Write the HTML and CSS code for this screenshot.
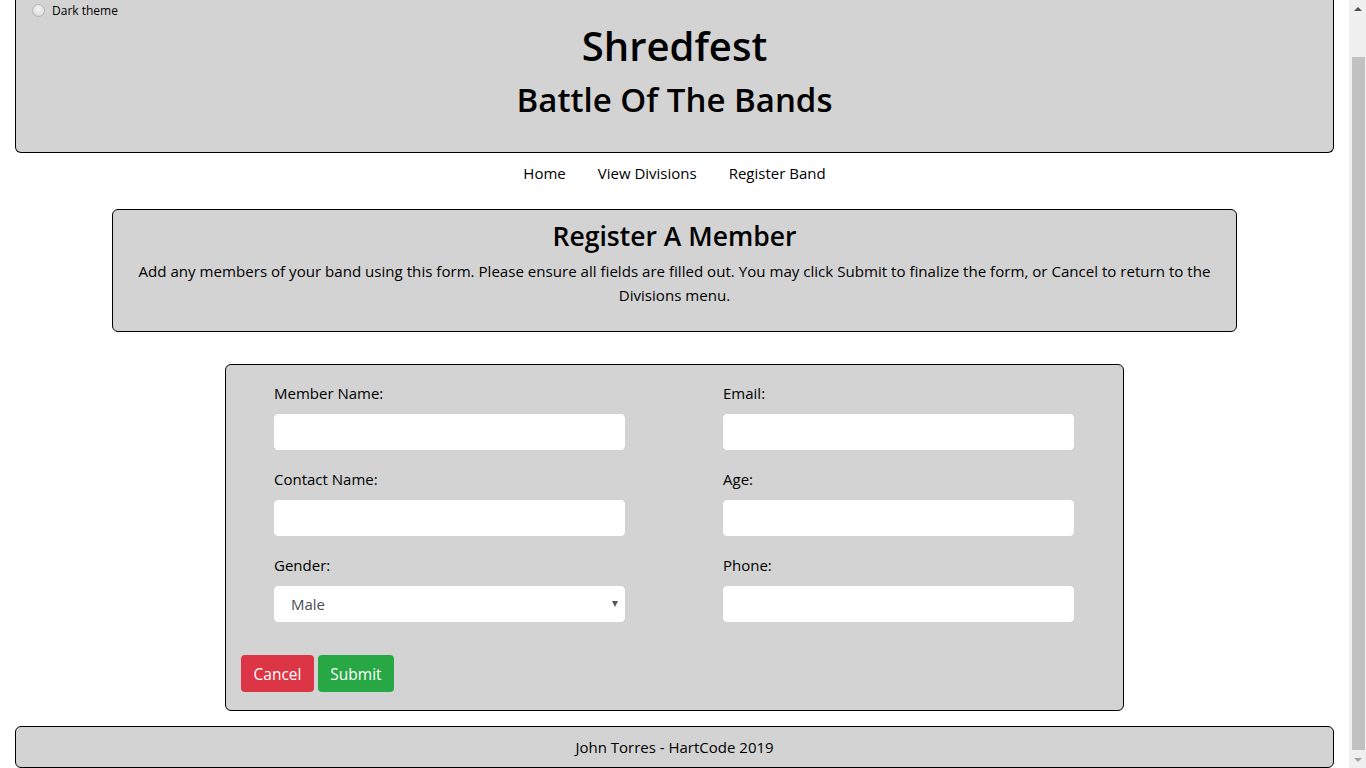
FILE: index.html
```html
<!DOCTYPE html>
<html lang="en">
<head>
<meta charset="utf-8">
<title>Shredfest - Register A Member</title>
<link rel="stylesheet" href="styles.css">
</head>
<body>
<div class="page">
  <header class="site-header">
    <label class="theme-toggle"><input type="radio" class="theme-radio" name="theme"><span>Dark theme</span></label>
    <h1 class="site-title">Shredfest</h1>
    <h2 class="site-subtitle">Battle Of The Bands</h2>
  </header>
  <nav class="site-nav">
    <a href="#" class="nav-link">Home</a>
    <a href="#" class="nav-link">View Divisions</a>
    <a href="#" class="nav-link">Register Band</a>
  </nav>
  <section class="info-box">
    <h3 class="info-title">Register A Member</h3>
    <p class="info-text">Add any members of your band using this form. Please ensure all fields are filled out. You may click Submit to finalize the form, or Cancel to return to the Divisions menu.</p>
  </section>
  <form class="member-form">
    <div class="form-grid">
      <div class="field">
        <label class="field-label">Member Name:</label>
        <input class="field-input" type="text">
      </div>
      <div class="field">
        <label class="field-label">Email:</label>
        <input class="field-input" type="text">
      </div>
      <div class="field">
        <label class="field-label">Contact Name:</label>
        <input class="field-input" type="text">
      </div>
      <div class="field">
        <label class="field-label">Age:</label>
        <input class="field-input" type="text">
      </div>
      <div class="field">
        <label class="field-label">Gender:</label>
        <div class="select-wrap">
          <select class="field-input field-select">
            <option>Male</option>
            <option>Female</option>
          </select>
        </div>
      </div>
      <div class="field">
        <label class="field-label">Phone:</label>
        <input class="field-input" type="text">
      </div>
    </div>
    <div class="form-actions">
      <button type="button" class="btn btn-cancel">Cancel</button>
      <button type="button" class="btn btn-submit">Submit</button>
    </div>
  </form>
  <footer class="site-footer">John Torres - HartCode 2019</footer>
</div>
<div class="scrollbar" aria-hidden="true">
  <div class="sb-arrow sb-up"></div>
  <div class="sb-track"><div class="sb-thumb"></div></div>
  <div class="sb-arrow sb-down"></div>
</div>
</body>
</html>
```
FILE: styles.css
```css
html, body {
  margin: 0;
  padding: 0;
  overflow: hidden;
}
body {
  font-family: "Open Sans", "Noto Sans", sans-serif;
  font-size: 15px;
  color: #212529;
  background: #fff;
  display: flex;
  height: 768px;
}
.page {
  flex: 1;
  min-width: 0;
}
.scrollbar {
  width: 17px;
  height: 768px;
  background: #f0f0f0;
  display: flex;
  flex-direction: column;
  align-items: center;
}
.sb-arrow {
  height: 17px;
  width: 17px;
  flex: none;
  display: flex;
  align-items: center;
  justify-content: center;
}
.sb-up::before {
  content: "";
  border-left: 4px solid transparent;
  border-right: 4px solid transparent;
  border-bottom: 4px solid #505050;
}
.sb-down::before {
  content: "";
  border-left: 4px solid transparent;
  border-right: 4px solid transparent;
  border-top: 4px solid #a3a3a3;
}
.sb-track {
  flex: 1;
  min-height: 0;
  width: 100%;
  display: flex;
  flex-direction: column;
  align-items: center;
  padding-top: 40px;
  box-sizing: border-box;
}
.sb-thumb {
  width: 13px;
  height: 693px;
  background: #c1c1c1;
  margin-left: 1px;
}
.site-header {
  margin: 0 15px;
  background: #d3d3d3;
  border: 1px solid #000;
  border-top: none;
  border-radius: 0 0 6px 6px;
  height: 153px;
  box-sizing: border-box;
  display: flex;
  flex-direction: column;
  align-items: center;
}
.theme-toggle {
  align-self: flex-start;
  display: flex;
  align-items: center;
  gap: 7px;
  margin: 2px 0 0 16px;
  font-size: 12px;
  color: #000;
  height: 16px;
}
.theme-radio {
  appearance: none;
  -webkit-appearance: none;
  width: 13px;
  height: 13px;
  margin: 0;
  border-radius: 50%;
  border: 1px solid #b4b4b4;
  background: radial-gradient(circle at 50% 40%, #f4f4f4 0%, #e2e2e2 60%, #cfcfcf 100%);
  box-sizing: border-box;
}
.site-title {
  margin: 2px 0 0;
  font-size: 40px;
  font-weight: 600;
  line-height: 52px;
  color: #000;
}
.site-subtitle {
  margin: 6px 0 0;
  font-size: 33px;
  font-weight: 600;
  line-height: 44px;
  color: #000;
}
.site-nav {
  display: flex;
  justify-content: center;
  gap: 32px;
  padding: 7px 0 0;
  height: 48px;
  box-sizing: border-box;
  margin-bottom: 8px;
}
.nav-link {
  color: #000;
  text-decoration: none;
  font-size: 15px;
  line-height: 26px;
}
.info-box {
  margin: 0 112px;
  background: #d3d3d3;
  border: 1px solid #000;
  border-radius: 6px;
  padding: 8px 20px 22px;
  text-align: center;
  height: 123px;
  box-sizing: border-box;
}
.info-title {
  margin: 0;
  font-size: 26.5px;
  font-weight: 600;
  line-height: 36px;
  color: #000;
}
.info-text {
  margin: 5px 0 0;
  line-height: 24px;
  font-size: 15.1px;
  color: #000;
}
.member-form {
  width: 899px;
  box-sizing: border-box;
  margin: 32px auto 0;
  background: #d3d3d3;
  border: 1px solid #000;
  border-radius: 6px;
  padding: 16px 15px 17px;
  height: 347px;
}
.form-grid {
  display: grid;
  grid-template-columns: 351px 351px;
  column-gap: 98px;
  row-gap: 17px;
  padding: 0 33px;
}
.field {
  display: flex;
  flex-direction: column;
}
.field-label {
  font-size: 15px;
  line-height: 24px;
  color: #000;
  margin-bottom: 9px;
}
.field-input {
  height: 36px;
  width: 100%;
  box-sizing: border-box;
  border: 1px solid #fff;
  border-radius: 4px;
  background: #fff;
  font-family: inherit;
  font-size: 15px;
  color: #495057;
  padding: 0 16px;
  margin: 0;
}
.select-wrap {
  position: relative;
}
.field-select {
  appearance: none;
  -webkit-appearance: none;
  outline: none;
}
.select-wrap::after {
  content: "";
  position: absolute;
  right: 7px;
  top: 15px;
  border-left: 3.5px solid transparent;
  border-right: 3.5px solid transparent;
  border-top: 6px solid #555;
}
.form-actions {
  display: flex;
  gap: 4px;
  margin-top: 33px;
}
.btn {
  height: 37px;
  border: none;
  border-radius: 4px;
  color: #fff;
  font-family: inherit;
  font-size: 15.5px;
  padding: 0;
  cursor: pointer;
}
.btn-cancel {
  background: #dc3545;
  width: 73px;
}
.btn-submit {
  background: #28a745;
  width: 76px;
}
.site-footer {
  margin: 15px 15px 0;
  background: #d3d3d3;
  border: 1px solid #000;
  border-radius: 6px;
  height: 42px;
  box-sizing: border-box;
  text-align: center;
  line-height: 40px;
  font-size: 15px;
  color: #000;
}
```
